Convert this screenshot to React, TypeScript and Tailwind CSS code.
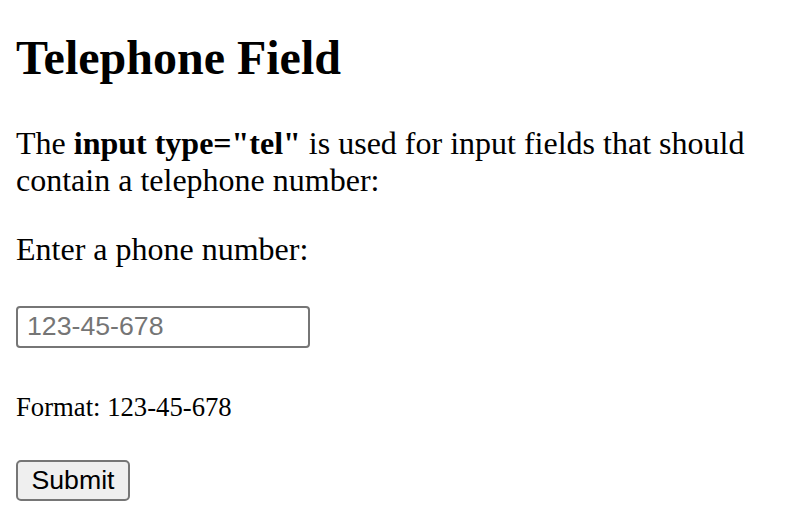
// Telephone field demo page — plain HTML look, drawn at 2x
export default function App() {
  return (
    <div className="min-h-screen bg-white px-[16px] text-black font-['Liberation_Serif','Times_New_Roman',serif]">
      <h2 className="pt-[30px] text-[48px] font-bold leading-[55px]">Telephone Field</h2>

      <p className="mt-[40px] text-[32px] leading-[36.8px]">
        The <b>input type="tel"</b> is used for input fields that should contain a telephone number:
      </p>

      <form className="mt-[32px]" onSubmit={e => e.preventDefault()}>
        <label htmlFor="phone" className="block text-[32px] leading-[36.8px]">
          Enter a phone number:
        </label>

        <input
          id="phone"
          type="tel"
          placeholder="123-45-678"
          className="mt-[38.4px] block h-[42px] w-[294px] rounded-[4px] border-2 border-[#767676] bg-white px-[9px] font-['Liberation_Sans',Arial,sans-serif] text-[26.7px] text-black outline-none placeholder:text-[#757575]"
        />

        <small className="mt-[44.6px] block text-[26.7px] leading-[30.7px]">Format: 123-45-678</small>

        <button
          type="submit"
          className="mt-[36.7px] block h-[41px] w-[114px] rounded-[5px] border-2 border-[#767676] bg-[#efefef] font-['Liberation_Sans',Arial,sans-serif] text-[26.7px] leading-none text-black"
        >
          Submit
        </button>
      </form>
    </div>
  );
}
